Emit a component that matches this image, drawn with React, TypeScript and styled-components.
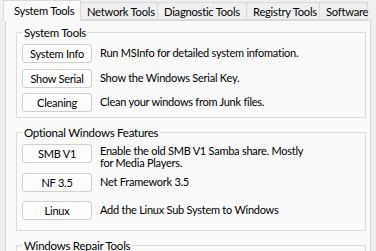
import React from "react";
import styled, { createGlobalStyle } from "styled-components";

const GlobalStyle = createGlobalStyle`
  html, body { margin: 0; padding: 0; background: #f0f0f0; }
  body {
    font-family: Lato, "Noto Sans", sans-serif;
    font-size: 11px;
    letter-spacing: -0.25px;
    color: #000;
    overflow: hidden;
  }
`;

const Window = styled.div`
  width: 376px;
  height: 251px;
  overflow: hidden;
  background: #f0f0f0;
`;

const TabStrip = styled.div`
  display: flex;
  align-items: flex-end;
  height: 20px;
  padding-left: 3px;
  position: relative;
  z-index: 1;
`;

const Tab = styled.div<{ $selected?: boolean; $w: number }>`
  box-sizing: border-box;
  width: ${(p) => p.$w}px;
  height: ${(p) => (p.$selected ? "21px" : "18px")};
  margin-bottom: ${(p) => (p.$selected ? "-1px" : "0")};
  padding: ${(p) => (p.$selected ? "2px 0 0 10px" : "1px 0 0 6px")};
  background: ${(p) => (p.$selected ? "#f9f9f9" : "#f0f0f0")};
  border: 1px solid #d9d9d9;
  border-bottom: ${(p) => (p.$selected ? "none" : "1px solid #d9d9d9")};
  border-left: ${(p) => (p.$selected ? "1px solid #d9d9d9" : "none")};
  white-space: nowrap;
  font-size: 11.2px;
  line-height: 15px;
`;

const Pane = styled.div`
  box-sizing: border-box;
  margin: 0 5px;
  height: 260px;
  border: 1px solid #d9d9d9;
  background: #f9f9f9;
  padding: 5px 4px 0 10px;
  display: flex;
  flex-direction: column;
  gap: 8px;
`;

const Group = styled.fieldset<{ $pad: string }>`
  margin: 0;
  border: 1px solid #dcdcdc;
  border-radius: 0;
  padding: ${(p) => p.$pad};
  display: flex;
  flex-direction: column;
  min-width: 0;
`;

const Legend = styled.legend`
  padding: 0 2px;
  margin-left: 0;
  font-size: 11.5px;
  line-height: 13px;
  color: #000;
`;

const Rows = styled.div<{ $gap: number }>`
  display: flex;
  flex-direction: column;
  gap: ${(p) => p.$gap}px;
`;

const Row = styled.div`
  display: flex;
  align-items: flex-start;
  height: 19px;
  gap: 8px;
`;

const Button = styled.button`
  box-sizing: border-box;
  flex: none;
  width: 70px;
  height: 19px;
  padding: 0;
  border: 1px solid #d0d0d0;
  border-radius: 3px;
  background: #fdfdfd;
  font-family: inherit;
  font-size: 11px;
  letter-spacing: inherit;
  color: #000;
  line-height: 17px;
  text-align: center;
`;

const Label = styled.div<{ $multi?: boolean }>`
  width: 215px;
  font-size: 11px;
  line-height: 12px;
  padding-top: ${(p) => (p.$multi ? "1px" : "3px")};
  white-space: ${(p) => (p.$multi ? "normal" : "nowrap")};
`;

const tabs = [
  { t: "System Tools", w: 78, sel: true },
  { t: "Network Tools", w: 77 },
  { t: "Diagnostic Tools", w: 89 },
  { t: "Registry Tools", w: 73 },
  { t: "Software", w: 48 },
];

export default function App() {
  return (
    <Window>
      <GlobalStyle />
      <TabStrip>
        {tabs.map((tab) => (
          <Tab key={tab.t} $selected={tab.sel} $w={tab.w}>
            {tab.t}
          </Tab>
        ))}
      </TabStrip>
      <Pane>
        <Group $pad="5px">
          <Legend>System Tools</Legend>
          <Rows $gap={5.5}>
            <Row>
              <Button>System Info</Button>
              <Label>Run MSInfo for detailed system infomation.</Label>
            </Row>
            <Row>
              <Button>Show Serial</Button>
              <Label>Show the Windows Serial Key.</Label>
            </Row>
            <Row>
              <Button>Cleaning</Button>
              <Label>Clean your windows from Junk files.</Label>
            </Row>
          </Rows>
        </Group>
        <Group $pad="5px 5px 10px 5px">
          <Legend>Optional Windows Features</Legend>
          <Rows $gap={9.5}>
            <Row>
              <Button>SMB V1</Button>
              <Label $multi>Enable the old SMB V1 Samba share. Mostly for Media Players.</Label>
            </Row>
            <Row>
              <Button>NF 3.5</Button>
              <Label>Net Framework 3.5</Label>
            </Row>
            <Row>
              <Button>Linux</Button>
              <Label>Add the Linux Sub System to Windows</Label>
            </Row>
          </Rows>
        </Group>
        <Group $pad="5px">
          <Legend>Windows Repair Tools</Legend>
          <Rows $gap={5}>
            <Row />
          </Rows>
        </Group>
      </Pane>
    </Window>
  );
}
